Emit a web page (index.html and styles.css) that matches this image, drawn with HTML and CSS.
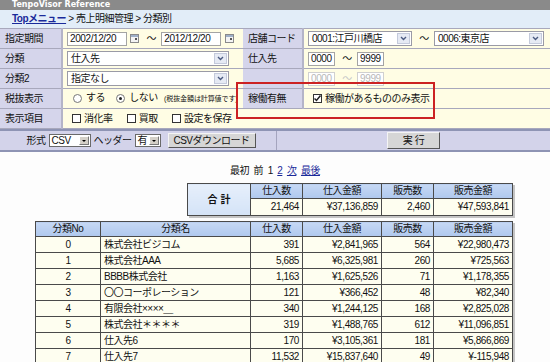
FILE: index.html
```html
<!DOCTYPE html>
<html lang="ja">
<head>
  <meta charset="UTF-8">
  <title>TenpoVisor Reference - 分類別</title>
  <link rel="stylesheet" href="styles.css">
</head>
<body>

<div class="titlebar">TenpoVisor Reference</div>
<div class="crumb"><a href="#">Topメニュー</a> &gt; 売上明細管理 &gt; 分類別</div>

<div class="cond-wrap">
  <table class="cond">
    <colgroup><col class="c1"><col class="c2"><col class="c3"><col class="c4"></colgroup>
    <tr>
      <th>指定期間</th>
      <td>
        <span class="txt num w60">2002/12/20</span>
        <span class="cal"><svg width="9" height="9" viewBox="0 0 9 9"><rect x="0.5" y="0.5" width="8" height="8" fill="#f4f4f4" stroke="#8a8a8a"/><rect x="1" y="1" width="7" height="2" fill="#9fb0c8"/><rect x="5" y="4" width="2" height="2" fill="#555"/></svg></span>
        <span class="tilde">～</span>
        <span class="txt num w60">2012/12/20</span>
        <span class="cal"><svg width="9" height="9" viewBox="0 0 9 9"><rect x="0.5" y="0.5" width="8" height="8" fill="#f4f4f4" stroke="#8a8a8a"/><rect x="1" y="1" width="7" height="2" fill="#9fb0c8"/><rect x="5" y="4" width="2" height="2" fill="#555"/></svg></span>
      </td>
      <th>店舗コード</th>
      <td>
        <span class="sel w104"><span class="sel-txt">0001:江戸川橋店</span><span class="sel-btn"><svg width="7" height="5" viewBox="0 0 7 5"><path d="M1 1 L3.5 3.5 L6 1" fill="none" stroke="#4a5a80" stroke-width="1.4"/></svg></span></span>
        <span class="tilde">～</span>
        <span class="sel w110"><span class="sel-txt">0006:東京店</span><span class="sel-btn"><svg width="7" height="5" viewBox="0 0 7 5"><path d="M1 1 L3.5 3.5 L6 1" fill="none" stroke="#4a5a80" stroke-width="1.4"/></svg></span></span>
      </td>
    </tr>
    <tr>
      <th>分類</th>
      <td>
        <span class="sel w162"><span class="sel-txt">仕入先</span><span class="sel-btn"><svg width="7" height="5" viewBox="0 0 7 5"><path d="M1 1 L3.5 3.5 L6 1" fill="none" stroke="#4a5a80" stroke-width="1.4"/></svg></span></span>
      </td>
      <th>仕入先</th>
      <td>
        <span class="txt num w27">0000</span>
        <span class="tilde">～</span>
        <span class="txt num w27">9999</span>
      </td>
    </tr>
    <tr>
      <th>分類2</th>
      <td>
        <span class="sel w162"><span class="sel-txt">指定なし</span><span class="sel-btn"><svg width="7" height="5" viewBox="0 0 7 5"><path d="M1 1 L3.5 3.5 L6 1" fill="none" stroke="#4a5a80" stroke-width="1.4"/></svg></span></span>
      </td>
      <th></th>
      <td>
        <span class="txt num w27 off">0000</span>
        <span class="tilde off">～</span>
        <span class="txt num w27 off">9999</span>
      </td>
    </tr>
    <tr>
      <th>税抜表示</th>
      <td>
        <span class="radio"></span>する
        <span class="radio on"></span>しない
        <span class="note">(税抜金額は計算値です)</span>
      </td>
      <th>稼働有無</th>
      <td>
        <span class="chk on"><svg width="9" height="9" viewBox="0 0 9 9"><path d="M1.5 4.5 L3.5 6.5 L7.5 1.5" fill="none" stroke="#222" stroke-width="1.5"/></svg></span>稼働があるもののみ表示
      </td>
    </tr>
    <tr>
      <th>表示項目</th>
      <td colspan="3">
        <span class="chk"></span>消化率
        <span class="chk"></span>買取
        <span class="chk"></span>設定を保存
      </td>
    </tr>
  </table>
  <div class="mark"></div>
</div>

<div class="tools">
  <div class="tools-l">
    形式
    <span class="osel w42"><span class="osel-txt">CSV</span><span class="osel-btn"></span></span>
    ヘッダー
    <span class="osel w26"><span class="osel-txt">有</span><span class="osel-btn"></span></span>
    <button class="btn btn-csv">CSVダウンロード</button>
  </div>
  <div class="tools-r">
    <button class="btn btn-run">実 行</button>
  </div>
</div>

<div class="pager">最初&nbsp; 前&nbsp; 1&nbsp; <a href="#">2</a>&nbsp; <a href="#">次</a>&nbsp; <a href="#">最後</a></div>

<table class="grid sum">
  <colgroup><col class="k63"><col class="k52"><col class="k79"><col class="k52"><col class="k79"></colgroup>
  <tr>
    <td class="total" rowspan="2">合 計</td>
    <th>仕入数</th><th>仕入金額</th><th>販売数</th><th>販売金額</th>
  </tr>
  <tr>
    <td class="n">21,464</td><td class="n">¥37,136,859</td><td class="n">2,460</td><td class="n">¥47,593,841</td>
  </tr>
</table>

<table class="grid list">
  <colgroup><col class="k65"><col class="k150"><col class="k52"><col class="k79"><col class="k52"><col class="k79"></colgroup>
  <tr><th>分類No</th><th>分類名</th><th>仕入数</th><th>仕入金額</th><th>販売数</th><th>販売金額</th></tr>
  <tr><td class="c">0</td><td>株式会社ビジコム</td><td class="n">391</td><td class="n">¥2,841,965</td><td class="n">564</td><td class="n">¥22,980,473</td></tr>
  <tr><td class="c">1</td><td>株式会社AAA</td><td class="n">5,685</td><td class="n">¥6,325,981</td><td class="n">260</td><td class="n">¥725,563</td></tr>
  <tr><td class="c">2</td><td>BBBB株式会社</td><td class="n">1,163</td><td class="n">¥1,625,526</td><td class="n">71</td><td class="n">¥1,178,355</td></tr>
  <tr><td class="c">3</td><td>〇〇コーポレーション</td><td class="n">121</td><td class="n">¥366,452</td><td class="n">48</td><td class="n">¥82,340</td></tr>
  <tr><td class="c">4</td><td>有限会社××××＿</td><td class="n">340</td><td class="n">¥1,244,125</td><td class="n">168</td><td class="n">¥2,825,028</td></tr>
  <tr><td class="c">5</td><td>株式会社＊＊＊＊</td><td class="n">319</td><td class="n">¥1,488,765</td><td class="n">612</td><td class="n">¥11,096,851</td></tr>
  <tr><td class="c">6</td><td>仕入先6</td><td class="n">170</td><td class="n">¥3,105,361</td><td class="n">181</td><td class="n">¥5,866,869</td></tr>
  <tr><td class="c">7</td><td>仕入先7</td><td class="n">11,532</td><td class="n">¥15,837,640</td><td class="n">49</td><td class="n">¥-115,948</td></tr>
</table>

</body>
</html>
```

FILE: styles.css
```css
* {
  box-sizing: border-box;
}

body {
  margin: 0;
  width: 550px;
  background-color: #fdfdfd;
  color: #111;
  font-family: 'Liberation Sans', 'Noto Sans CJK JP', sans-serif;
  font-size: 10px;
  line-height: 12px;
  letter-spacing: -0.5px;
}

a {
  color: #1a2a9a;
}

/* header */
.titlebar {
  height: 10px;
  padding-left: 12px;
  background-color: #8a8a8a;
  color: #fff;
  font-family: 'DejaVu Sans', sans-serif;
  font-weight: bold;
  font-size: 8px;
  line-height: 10px;
  letter-spacing: 0;
}

.crumb {
  height: 18px;
  padding-left: 12px;
  background-color: #e2edf8;
  line-height: 18px;
}

.crumb a {
  font-weight: bold;
}

/* condition form */
.cond-wrap {
  position: relative;
}

.cond {
  width: 550px;
  border-collapse: collapse;
  table-layout: fixed;
}

.c1 { width: 62px; }
.c2 { width: 181px; }
.c3 { width: 60px; }
.c4 { width: 247px; }

.cond th,
.cond td {
  height: 20px;
  padding: 0 0 0 4px;
  border: 1px solid #a8a8bc;
  border-left: none;
  white-space: nowrap;
}

.cond th {
  background-color: #d5d5eb;
  font-weight: normal;
  text-align: left;
  padding-left: 5px;
  border-right: 2px solid #b4b4c8;
}

.cond td {
  background-color: #fffde4;
  border-right: none;
}

.cond td > span,
.cond td > svg {
  vertical-align: middle;
}

.txt {
  display: inline-block;
  height: 14px;
  padding: 0 2px;
  border: 1px solid #a4a4a4;
  background-color: #fff;
  line-height: 12px;
}

.num {
  font-size: 10px;
  letter-spacing: -0.4px;
}

.txt.off {
  color: #b8b8b8;
  border-color: #d0d0d0;
}

.tilde {
  display: inline-block;
  margin: 0 3px 0 5px;
}

.tilde.off {
  color: #c8c8c8;
}

.cal {
  display: inline-block;
  width: 9px;
  height: 9px;
  margin-left: 1px;
  line-height: 0;
}

.w27 { width: 27px; }
.w42 { width: 42px; }
.w26 { width: 26px; }
.w60 { width: 60px; }
.w104 { width: 104px; }
.w110 { width: 110px; }
.w162 { width: 162px; }

.sel {
  display: inline-flex;
  height: 15px;
  border: 1px solid #9a9aa6;
  background-color: #fff;
}

.sel-txt {
  flex: 1;
  padding-left: 3px;
  line-height: 13px;
  overflow: hidden;
}

.sel-btn {
  display: flex;
  align-items: center;
  justify-content: center;
  width: 13px;
  margin: 1px;
  background-color: #e6eaf4;
  border: 1px solid #c4cadb;
}

.radio {
  display: inline-block;
  width: 9px;
  height: 9px;
  margin: 0 4px 0 6px;
  border: 1px solid #777;
  border-radius: 50%;
  background-color: #fff;
  position: relative;
}

.cond td .radio ~ .radio {
  margin-left: 9px;
}

.radio.on::after {
  content: "";
  position: absolute;
  left: 2px;
  top: 2px;
  width: 3px;
  height: 3px;
  border-radius: 50%;
  background-color: #222;
}

.note {
  margin-left: 4px;
  font-size: 7px;
  letter-spacing: -0.1px;
}

.chk {
  display: inline-block;
  width: 9px;
  height: 9px;
  margin: 0 3px 0 5px;
  border: 1px solid #333;
  background-color: #fff;
  line-height: 0;
}

.chk svg {
  margin: -1px 0 0 -1px;
}

.cond td .chk ~ .chk {
  margin-left: 12px;
}

.mark {
  position: absolute;
  left: 236px;
  top: 54px;
  width: 199px;
  height: 37px;
  border: 2px solid #cc2222;
}

/* toolbar */
.tools {
  display: grid;
  grid-template-columns: 276px 1fr;
  height: 23px;
  border-top: 2px solid #8e94b4;
  border-bottom: 2px solid #8e94b4;
  background-color: #d3d3ea;
}

.tools-l,
.tools-r {
  display: flex;
  align-items: center;
  justify-content: center;
  gap: 3px;
}

.tools-l {
  padding-left: 6px;
}

.tools-r {
  border-left: 1px solid #a4a4be;
}

.osel {
  display: inline-flex;
  height: 13px;
  border: 1px solid #6a6a6a;
  background-color: #fff;
}

.osel-txt {
  flex: 1;
  padding-left: 2px;
  line-height: 11px;
}

.osel-btn {
  width: 10px;
  margin: 1px;
  background-color: #d4d0c8;
  border: 1px solid;
  border-color: #fff #777 #777 #fff;
  position: relative;
}

.osel-btn::after {
  content: "";
  position: absolute;
  left: 2px;
  top: 3px;
  border-left: 2px solid transparent;
  border-right: 2px solid transparent;
  border-top: 2px solid #000;
}

.btn {
  font-family: inherit;
  font-size: 10px;
  line-height: 11px;
  letter-spacing: -0.5px;
  padding: 0;
  background-color: #d6d6d6;
  color: #111;
  border: 1px solid;
  border-color: #f4f4f4 #555 #555 #f4f4f4;
}

.btn-csv {
  width: 88px;
  height: 15px;
  margin-left: 4px;
}

.btn-run {
  width: 53px;
  height: 17px;
}

/* pager */
.pager {
  padding: 13px 0 0 0;
  height: 31px;
  text-align: center;
}

/* result tables */
.grid {
  border-collapse: collapse;
  table-layout: fixed;
  box-shadow: 2px 2px 0 #c4c4c4;
}

.grid th,
.grid td {
  border: 1px solid #4a4a4a;
  padding: 0 3px;
  white-space: nowrap;
}

.grid th {
  height: 15px;
  font-weight: normal;
  background: linear-gradient(#c6d8f4, #afc8ee);
}

.grid td {
  height: 16px;
  background-color: #fefef0;
}

.grid td.n {
  text-align: right;
  letter-spacing: -0.4px;
}

.grid td.c {
  text-align: center;
}

.grid td.total {
  text-align: center;
  font-weight: bold;
  letter-spacing: 0;
  background: linear-gradient(#e6effb, #d4e3f7);
}

.sum {
  margin-left: 187px;
}

.sum td {
  height: 17px;
}

.list {
  margin: 5px 0 0 35px;
}

.k52 { width: 52px; }
.k63 { width: 63px; }
.k65 { width: 65px; }
.k79 { width: 79px; }
.k150 { width: 150px; }
```
